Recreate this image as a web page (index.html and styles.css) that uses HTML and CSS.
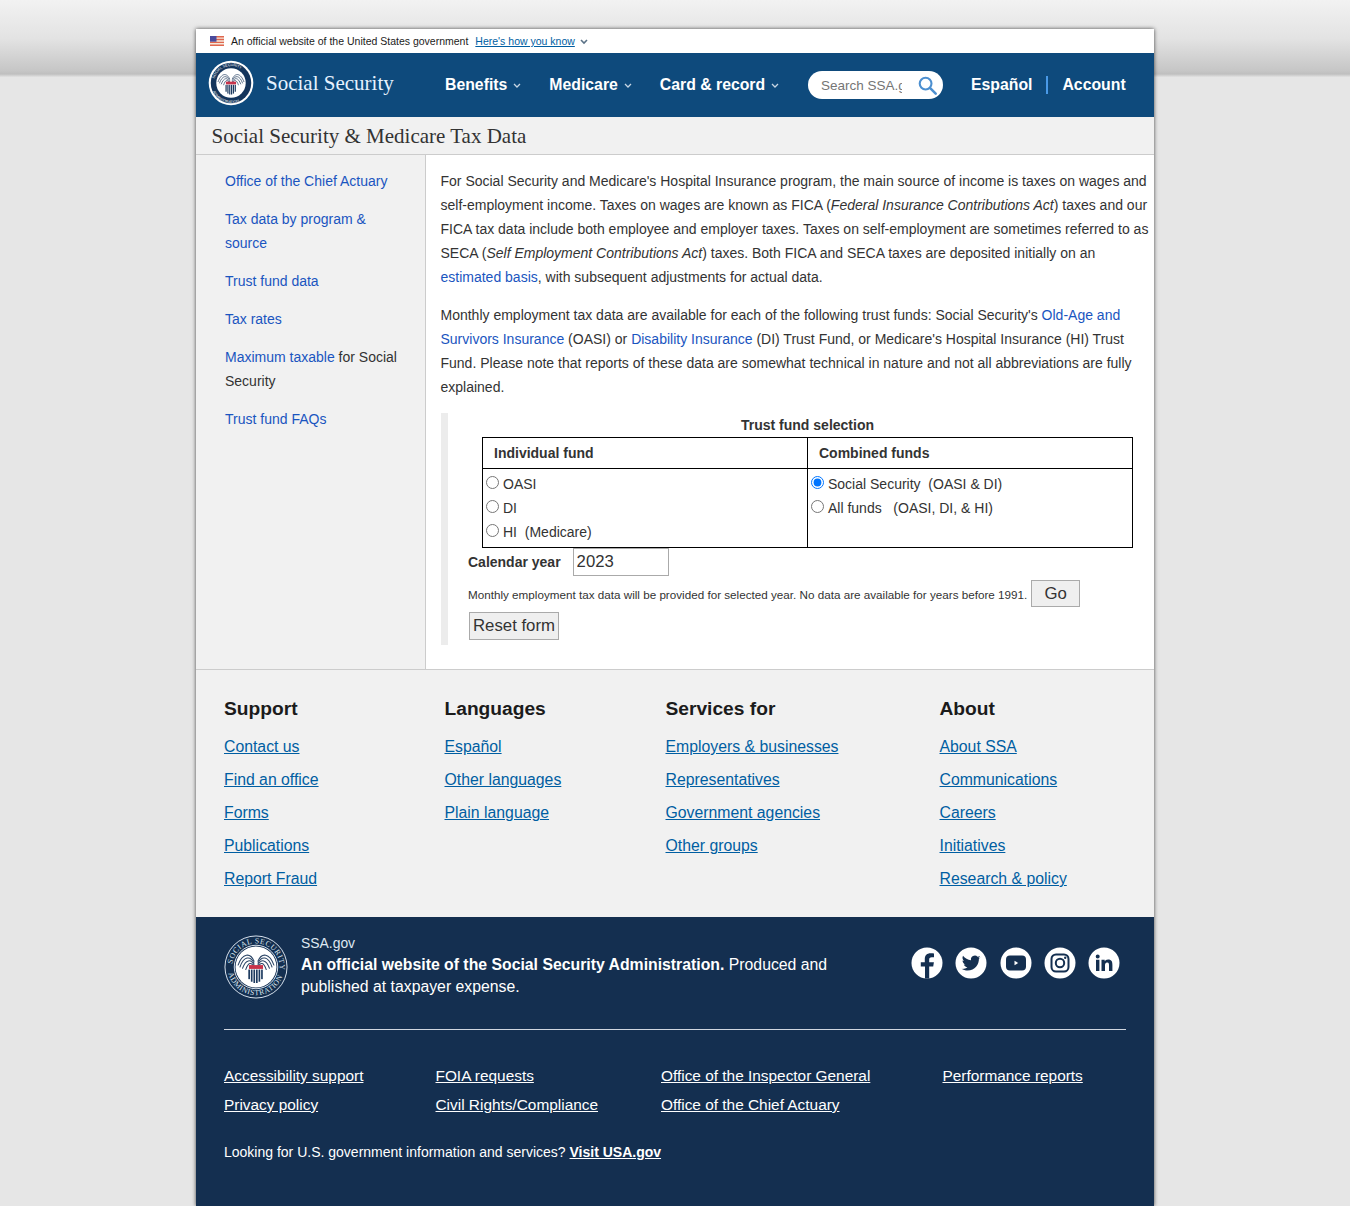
FILE: index.html
```html
<!DOCTYPE html>
<html lang="en">
<head>
  <meta charset="UTF-8">
  <meta name="viewport" content="width=device-width, initial-scale=1.0">
  <title>Social Security &amp; Medicare Tax Data</title>
  <link rel="stylesheet" href="styles.css">
</head>
<body>
  <svg class="defs" width="0" height="0" aria-hidden="true">
    <defs>
      <path id="seal-ring" d="M50 50m-37 0a37 37 0 1 1 74 0a37 37 0 1 1 -74 0"/>
      <path id="seal-low" d="M50 50m-44 0a44 44 0 0 0 88 0"/>
      <g id="seal-eagle">
        <circle cx="50" cy="50" r="32" fill="#fff"/>
        <g fill="none" stroke="#2b4566" stroke-width="1.600" stroke-linecap="round">
          <path d="M47 41C41 27 29 28 22 47"/>
          <path d="M47 44C41 32 31 33 25 50"/>
          <path d="M47 47C42 37 34 38 29 52"/>
          <path d="M47 50C43 42 38 42 34 54"/>
          <path d="M53 41C59 27 71 28 78 47"/>
          <path d="M53 44C59 32 69 33 75 50"/>
          <path d="M53 47C58 37 66 38 71 52"/>
          <path d="M53 50C57 42 62 42 66 54"/>
        </g>
        <rect x="39" y="47" width="22" height="6" fill="#c8334a"/>
        <g fill="#1d3a5f">
          <rect x="38" y="54" width="2.600" height="15"/>
          <rect x="42" y="54" width="2.600" height="19"/>
          <rect x="46" y="54" width="2.600" height="21"/>
          <rect x="50" y="54" width="2.600" height="21"/>
          <rect x="54" y="54" width="2.600" height="19"/>
          <rect x="58" y="54" width="2.600" height="15"/>
        </g>
      </g>
    </defs>
  </svg>

  <div class="page">
    <div class="gov-banner">
      <svg class="flag" width="14" height="10" viewBox="0 0 14 10" aria-hidden="true">
        <rect width="14" height="10" fill="#f4e8dc"/>
        <path d="M0 0h14v1.400H0zM0 2.800h14v1.400H0zM0 5.700h14v1.400H0zM0 8.600h14V10H0z" fill="#e0674f"/>
        <rect width="6.500" height="5.700" fill="#4a4a9c"/>
      </svg>
      <span>An official website of the United States government</span>
      <a href="#">Here's how you know</a>
      <svg class="banner-caret" width="8" height="6" viewBox="0 0 8 6" aria-hidden="true">
        <path d="M1 1l3 3 3-3" fill="none" stroke="#5b7287" stroke-width="1.600"/>
      </svg>
    </div>

    <header class="nav">
      <a class="brand" href="#">
        <svg class="nav-seal" width="46" height="46" viewBox="0 0 100 100" aria-hidden="true">
          <circle cx="50" cy="50" r="48.500" fill="#fff"/>
          <circle cx="50" cy="50" r="44" fill="#14355c"/>
          <use href="#seal-eagle"/>
          <text class="seal-text"><textPath href="#seal-ring" startOffset="4%">SOCIAL SECURITY</textPath></text>
          <text class="seal-text"><textPath href="#seal-low" startOffset="14%">ADMINISTRATION</textPath></text>
        </svg>
        <span class="brand-name">Social Security</span>
      </a>
      <nav class="nav-menu">
        <a href="#">Benefits<svg class="caret" width="8" height="6" viewBox="0 0 8 6"><path d="M1 1l3 3 3-3"/></svg></a>
        <a href="#">Medicare<svg class="caret" width="8" height="6" viewBox="0 0 8 6"><path d="M1 1l3 3 3-3"/></svg></a>
        <a href="#">Card &amp; record<svg class="caret" width="8" height="6" viewBox="0 0 8 6"><path d="M1 1l3 3 3-3"/></svg></a>
      </nav>
      <form class="search">
        <input type="text" placeholder="Search SSA.gov">
        <svg width="19" height="19" viewBox="0 0 20 20" aria-hidden="true">
          <circle cx="8" cy="8" r="6.200" fill="none" stroke="#4c8fd0" stroke-width="2.200"/>
          <path d="M12.600 12.600l6 6" stroke="#4c8fd0" stroke-width="2.600" stroke-linecap="round"/>
        </svg>
      </form>
      <a class="nav-link" href="#">Español</a>
      <span class="nav-sep"></span>
      <a class="nav-link" href="#">Account</a>
    </header>

    <div class="title-bar">Social Security &amp; Medicare Tax Data</div>

    <div class="main">
      <aside class="side">
        <p><a href="#">Office of the Chief Actuary</a></p>
        <p><a href="#">Tax data by program &amp; source</a></p>
        <p><a href="#">Trust fund data</a></p>
        <p><a href="#">Tax rates</a></p>
        <p><a href="#">Maximum taxable</a> for Social Security</p>
        <p><a href="#">Trust fund FAQs</a></p>
      </aside>

      <section class="content">
        <p>For Social Security and Medicare's Hospital Insurance program, the main source of income is taxes on wages and self-employment income. Taxes on wages are known as FICA (<em>Federal Insurance Contributions Act</em>) taxes and our FICA tax data include both employee and employer taxes. Taxes on self-employment are sometimes referred to as SECA (<em>Self Employment Contributions Act</em>) taxes. Both FICA and SECA taxes are deposited initially on an <a href="#">estimated basis</a>, with subsequent adjustments for actual data.</p>
        <p>Monthly employment tax data are available for each of the following trust funds: Social Security's <a href="#">Old-Age and Survivors Insurance</a> (OASI) or <a href="#">Disability Insurance</a> (DI) Trust Fund, or Medicare's Hospital Insurance (HI) Trust Fund. Please note that reports of these data are somewhat technical in nature and not all abbreviations are fully explained.</p>

        <form class="fund-form">
          <table class="fund-table">
            <caption>Trust fund selection</caption>
            <tr>
              <th>Individual fund</th>
              <th>Combined funds</th>
            </tr>
            <tr>
              <td>
                <label><input type="radio" name="fund">OASI</label>
                <label><input type="radio" name="fund">DI</label>
                <label><input type="radio" name="fund">HI&nbsp; (Medicare)</label>
              </td>
              <td>
                <label><input type="radio" name="fund" checked>Social Security&nbsp; (OASI &amp; DI)</label>
                <label><input type="radio" name="fund">All funds &nbsp; (OASI, DI, &amp; HI)</label>
              </td>
            </tr>
          </table>
          <div class="year-row">
            <label for="year">Calendar year</label>
            <input id="year" type="text" value="2023">
          </div>
          <div class="note-row">
            <small>Monthly employment tax data will be provided for selected year. No data are available for years before 1991.</small>
            <button type="submit">Go</button>
          </div>
          <button class="reset" type="reset">Reset form</button>
        </form>
      </section>
    </div>

    <div class="foot-links">
      <div class="foot-col col-support">
        <h3>Support</h3>
        <a href="#">Contact us</a>
        <a href="#">Find an office</a>
        <a href="#">Forms</a>
        <a href="#">Publications</a>
        <a href="#">Report Fraud</a>
      </div>
      <div class="foot-col col-lang">
        <h3>Languages</h3>
        <a href="#">Español</a>
        <a href="#">Other languages</a>
        <a href="#">Plain language</a>
      </div>
      <div class="foot-col col-services">
        <h3>Services for</h3>
        <a href="#">Employers &amp; businesses</a>
        <a href="#">Representatives</a>
        <a href="#">Government agencies</a>
        <a href="#">Other groups</a>
      </div>
      <div class="foot-col">
        <h3>About</h3>
        <a href="#">About SSA</a>
        <a href="#">Communications</a>
        <a href="#">Careers</a>
        <a href="#">Initiatives</a>
        <a href="#">Research &amp; policy</a>
      </div>
    </div>

    <footer class="foot-dark">
      <div class="foot-top">
        <svg class="foot-seal" width="64" height="64" viewBox="0 0 100 100" aria-hidden="true">
          <circle cx="50" cy="50" r="48.500" fill="none" stroke="#dfe8f2" stroke-width="1.500"/>
          <circle cx="50" cy="50" r="34" fill="none" stroke="#dfe8f2" stroke-width="1.500"/>
          <use href="#seal-eagle"/>
          <text class="seal-text seal-big"><textPath href="#seal-ring" startOffset="2%">SOCIAL SECURITY</textPath></text>
          <text class="seal-text seal-big"><textPath href="#seal-low" startOffset="7%">ADMINISTRATION</textPath></text>
        </svg>
        <div class="foot-about">
          <div class="foot-domain">SSA.gov</div>
          <p><strong>An official website of the Social Security Administration.</strong> Produced and published at taxpayer expense.</p>
        </div>
        <div class="socials">
          <svg width="32" height="32" viewBox="0 0 32 32"><circle cx="16" cy="16" r="15.500" fill="#fff"/><path d="M18.200 31.500V19.600h4l.7-4.400h-4.700v-2.600c0-1.400.6-2.300 2.500-2.300h2.300V6.500c-.8-.1-2-.3-3.500-.3-3.500 0-5.700 2.100-5.700 5.800v3.200H9.800v4.400h4.200v11.900z" fill="#142f50"/></svg>
          <svg width="32" height="32" viewBox="0 0 32 32"><circle cx="16" cy="16" r="15.500" fill="#fff"/><path d="M25.500 10.400c-.7.300-1.400.5-2.200.6.800-.5 1.400-1.200 1.700-2.100-.7.400-1.600.8-2.400.9a3.900 3.900 0 0 0-6.600 3.500C12.800 12.700 10 11.200 8 8.800c-1 1.800-.5 4 1.200 5.200-.6 0-1.200-.2-1.700-.5 0 1.900 1.300 3.500 3.100 3.900-.6.200-1.200.2-1.800.1.500 1.500 1.900 2.600 3.600 2.700-1.700 1.300-3.800 1.900-5.800 1.600 1.700 1.100 3.800 1.800 6 1.800 7.400 0 11.500-6.200 11.300-11.800.8-.6 1.500-1.400 2.600-2.400z" fill="#142f50"/></svg>
          <svg width="32" height="32" viewBox="0 0 32 32"><circle cx="16" cy="16" r="15.500" fill="#fff"/><rect x="6" y="8.500" width="20" height="15" rx="4" fill="#142f50"/><path d="M14.500 13.800v4.400l3.800-2.200z" fill="#fff"/></svg>
          <svg width="32" height="32" viewBox="0 0 32 32"><circle cx="16" cy="16" r="15.500" fill="#fff"/><rect x="7.500" y="7.500" width="17" height="17" rx="4.500" fill="none" stroke="#142f50" stroke-width="2"/><circle cx="16" cy="16" r="4.200" fill="none" stroke="#142f50" stroke-width="2"/><circle cx="21.200" cy="10.800" r="1.200" fill="#142f50"/></svg>
          <svg width="32" height="32" viewBox="0 0 32 32"><circle cx="16" cy="16" r="15.500" fill="#fff"/><path d="M8 12.800h3.400V24H8zM9.700 7.500a2 2 0 1 1 0 4 2 2 0 0 1 0-4zM13.500 12.800h3.200v1.500c.5-.9 1.700-1.800 3.400-1.800 3.600 0 4.300 2.300 4.300 5.400V24H21v-5.400c0-1.300 0-3-1.800-3s-2.200 1.400-2.200 2.900V24h-3.500z" fill="#142f50"/></svg>
        </div>
      </div>

      <div class="foot-legal">
        <div class="legal-col col-a">
          <a href="#">Accessibility support</a>
          <a href="#">Privacy policy</a>
        </div>
        <div class="legal-col col-b">
          <a href="#">FOIA requests</a>
          <a href="#">Civil Rights/Compliance</a>
        </div>
        <div class="legal-col col-c">
          <a href="#">Office of the Inspector General</a>
          <a href="#">Office of the Chief Actuary</a>
        </div>
        <div class="legal-col">
          <a href="#">Performance reports</a>
        </div>
      </div>

      <p class="usagov">Looking for U.S. government information and services? <a href="#">Visit USA.gov</a></p>
    </footer>
  </div>
</body>
</html>
```

FILE: styles.css
```css
* {
  box-sizing: border-box;
}

body {
  margin: 0;
  font-family: "Liberation Sans", Arial, sans-serif;
  color: #333;
  background: #e6e6e6 linear-gradient(#f2f2f2, #e3e3e3 50%, #c6c6c6 92%, #bfbfbf 96%, #e2e2e2) no-repeat;
  background-size: 100% 77px;
}

.defs {
  display: block;
  height: 0;
}

.page {
  width: 958px;
  margin: 29px auto 0;
  background: #fff;
  box-shadow: 0 0 4px rgba(0, 0, 0, 0.7);
}

/* gov banner */
.gov-banner {
  display: flex;
  align-items: center;
  height: 24px;
  padding-left: 14px;
  font-size: 10.500px;
  color: #1b1b1b;
  background: #fff;
}

.flag {
  margin-right: 7px;
}

.gov-banner a {
  margin-left: 7px;
  color: #005ea2;
  font-size: 10.500px;
}

.banner-caret {
  margin-left: 5px;
  margin-top: 2px;
}

/* nav */
.nav {
  display: flex;
  align-items: center;
  height: 64px;
  padding: 0 28px 0 12px;
  background: #0e4a7c;
  color: #fff;
}

.nav a {
  color: #fff;
  text-decoration: none;
}

.brand {
  display: flex;
  align-items: center;
  width: 237px;
}

.nav-seal {
  margin-top: -4px;
  margin-right: 12px;
}

.brand-name {
  margin-top: -4px;
  font-family: "Liberation Serif", serif;
  font-size: 21px;
  color: #e6f2ff;
}

.seal-text {
  font-family: "Liberation Sans", sans-serif;
  font-size: 8px;
  fill: #fff;
}

.seal-big {
  font-family: "Liberation Serif", serif;
  font-size: 12px;
  letter-spacing: 0.800px;
  fill: #dfe8f2;
}

.nav-menu {
  display: flex;
  gap: 28px;
  width: 363px;
}

.nav-menu a {
  font-size: 15.800px;
  font-weight: 700;
  white-space: nowrap;
}

.caret {
  margin-left: 6px;
  vertical-align: 1px;
}

.caret path {
  fill: none;
  stroke: #c7d6e4;
  stroke-width: 1.300;
}

.search {
  display: flex;
  align-items: center;
  width: 135px;
  height: 28px;
  padding: 0 5px 0 13px;
  margin-right: 28px;
  background: #fff;
  border-radius: 14px;
}

.search input {
  width: 81px;
  padding: 0;
  margin-right: 16px;
  border: 0;
  outline: 0;
  font: 13.500px "Liberation Sans", sans-serif;
}

.search input::placeholder {
  color: #757575;
  opacity: 1;
}

.nav-link {
  font-size: 15.800px;
  font-weight: 700;
}

.nav-sep {
  width: 2px;
  height: 18px;
  margin: 0 14px;
  background: #4a9ae8;
}

/* title */
.title-bar {
  height: 38px;
  padding: 7px 0 0 15.500px;
  font-family: "Liberation Serif", serif;
  font-size: 21px;
  color: #333;
  background: #f1f1f1;
  border-bottom: 1px solid #ccc;
}

/* main */
.main {
  display: flex;
  height: 515px;
  font-size: 14px;
  line-height: 24px;
  border-bottom: 1px solid #ccc;
}

.main a {
  color: #1a55c0;
  text-decoration: none;
}

.side {
  width: 230px;
  padding: 14px 20px 0 29px;
  background: #f1f1f1;
  border-right: 1px solid #ccc;
}

.side p {
  margin: 0 0 14px;
}

.content {
  flex: 1;
  padding: 14px 4px 0 14.500px;
}

.content p {
  margin: 0 0 14px;
}

.fund-form {
  padding-left: 20px;
  border-left: 7px solid #ececec;
  margin-top: 2px;
  margin-left: 0.500px;
  height: 232px;
}

.fund-table {
  width: 651px;
  margin-left: 14px;
  border-collapse: collapse;
}

.fund-table caption {
  font-weight: 700;
}

.fund-table th,
.fund-table td {
  border: 1px solid #000;
  width: 50%;
  vertical-align: top;
}

.fund-table th {
  height: 31px;
  padding: 3px 11px;
  text-align: left;
}

.fund-table td {
  padding: 3px 2px 3px 3px;
  height: 78px;
}

.fund-table label {
  display: block;
  height: 24px;
}

.fund-table input {
  margin: 0 4px 0 0;
}

.year-row {
  display: flex;
  align-items: center;
  height: 28px;
  font-weight: 700;
}

.year-row input {
  width: 96px;
  height: 28px;
  margin-left: 12px;
  padding: 0 3px 1px;
  border: 1px solid #aaa;
  font: 16.700px "Liberation Sans", sans-serif;
  color: #333;
}

.note-row {
  display: flex;
  align-items: center;
  height: 28px;
  margin-top: 5px;
}

.note-row small {
  font-size: 11.680px;
}

.note-row button {
  width: 49px;
  height: 27px;
  margin-left: 4px;
  margin-top: -4px;
  padding-top: 1px;
}

button {
  padding: 0;
  font: 16.800px "Liberation Sans", sans-serif;
  color: #333;
  background: #efefef;
  border: 1px solid #aaa;
}

.reset {
  width: 90px;
  height: 28px;
  margin-top: 3px;
  margin-left: 1px;
  padding-bottom: 1px;
}

/* footer links */
.foot-links {
  display: flex;
  height: 247px;
  padding: 27px 0 0 28px;
  background: #f1f1f1;
}

.foot-col {
  display: flex;
  flex-direction: column;
  align-items: flex-start;
}

.col-support {
  width: 220.500px;
}

.col-lang {
  width: 221px;
}

.col-services {
  width: 274px;
}

.foot-col h3 {
  margin: 0 0 14px;
  font-size: 19.200px;
  line-height: 24px;
  color: #1b1b1b;
}

.foot-col a {
  height: 33px;
  font-size: 15.800px;
  line-height: 24px;
  color: #005ea2;
}

/* dark footer */
.foot-dark {
  height: 289px;
  padding: 18px 28px 0;
  color: #fff;
  background: #142f50;
}

.foot-dark a {
  color: #fff;
}

.foot-top {
  display: flex;
  height: 95px;
  border-bottom: 1px solid #d0d7e0;
}

.foot-about {
  width: 560px;
  margin-left: 13px;
  font-size: 15.800px;
  line-height: 22px;
}

.foot-about p {
  margin: 2px 0 0;
}

.foot-domain {
  margin-top: -1px;
  font-size: 13.900px;
  line-height: 18px;
  color: #dfe8f2;
}

.socials {
  display: flex;
  gap: 12.250px;
  margin-left: auto;
  padding: 12px 6px 0 0;
}

.foot-legal {
  display: flex;
  margin-top: 37px;
  font-size: 15.400px;
}

.legal-col {
  display: flex;
  flex-direction: column;
  gap: 11px;
}

.legal-col a {
  line-height: 18px;
}

.col-a {
  width: 211.500px;
}

.col-b {
  width: 225.500px;
}

.col-c {
  width: 281.500px;
}

.usagov {
  margin: 30px 0 0;
  font-size: 14px;
}

.usagov a {
  font-weight: 700;
}
```
